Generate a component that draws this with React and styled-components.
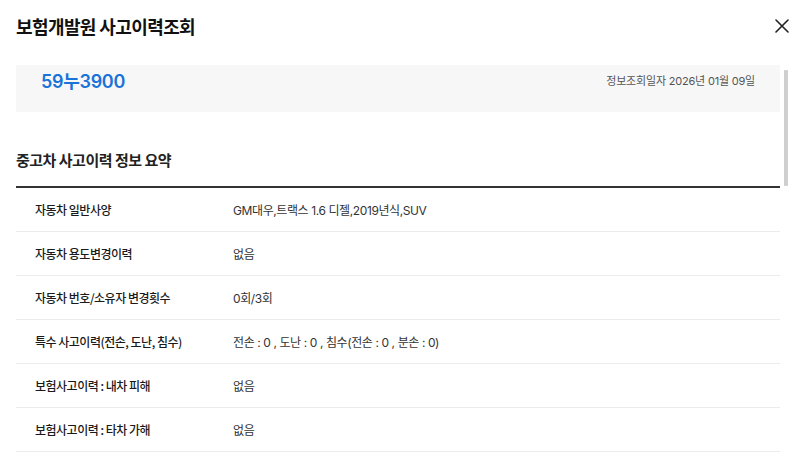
import React from "react";
import styled, { createGlobalStyle } from "styled-components";

const Global = createGlobalStyle`
  html, body { margin: 0; padding: 0; background: #fff; }
  body { font-family: "Noto Sans CJK KR", "Noto Sans", sans-serif; color: #222; }
  * { box-sizing: border-box; }
`;

const Modal = styled.div`
  width: 800px;
  height: 453px;
  overflow: hidden;
  background: #fff;
  display: flex;
  flex-direction: column;
`;

const Header = styled.div`
  display: flex;
  align-items: center;
  justify-content: space-between;
  padding: 15px 10px 0 16px;
`;

const Title = styled.h1`
  margin: 0;
  font-size: 18px;
  font-weight: 700;
  letter-spacing: -0.6px;
  line-height: 22px;
  color: #111;
`;

const CloseButton = styled.button`
  border: 0;
  background: none;
  padding: 0;
  width: 16px;
  height: 16px;
  display: flex;
  align-items: center;
  justify-content: center;
  cursor: pointer;
`;

const Body = styled.div`
  display: flex;
  flex: 1;
  padding: 28px 0 0 16px;
  gap: 4px;
`;

const Content = styled.div`
  flex: 1;
  max-width: 764px;
`;

const Scrollbar = styled.div`
  width: 4px;
  height: 116px;
  margin-top: 5px;
  background: #cfcfcf;
  border-radius: 1px;
`;

const PlateBox = styled.div`
  background: #f7f7f7;
  height: 47px;
  display: flex;
  justify-content: space-between;
  align-items: flex-start;
  padding: 6px 25px 0 25px;
`;

const Plate = styled.div`
  color: #1a73d8;
  font-family: "Inter", "Noto Sans CJK KR", sans-serif;
  font-size: 18px;
  font-weight: 600;
  letter-spacing: -0.3px;
  line-height: 22px;
`;

const QueryDate = styled.div`
  font-family: "Inter", "Noto Sans CJK KR", sans-serif;
  font-size: 11px;
  color: #555;
  letter-spacing: -0.2px;
  line-height: 16px;
  padding-top: 2px;
`;

const SectionTitle = styled.h2`
  margin: 37px 0 0;
  font-size: 15px;
  font-weight: 700;
  letter-spacing: -0.5px;
  color: #222;
  line-height: 22px;
  padding-bottom: 15px;
  border-bottom: 2px solid #333;
`;

const Table = styled.div`
  display: flex;
  flex-direction: column;
`;

const Row = styled.div`
  display: grid;
  grid-template-columns: 198px 1fr;
  align-items: center;
  height: 44px;
  padding-left: 19px;
  border-bottom: 1px solid #ececec;
`;

const Label = styled.div`
  font-size: 12px;
  font-weight: 500;
  color: #1a1a1a;
  letter-spacing: -0.5px;
`;

const Value = styled.div`
  font-family: "Inter", "Noto Sans CJK KR", sans-serif;
  font-size: 12px;
  font-weight: 400;
  color: #333;
  letter-spacing: -0.4px;
`;

const rows = [
  ["자동차 일반사양", "GM대우,트랙스 1.6 디젤,2019년식,SUV"],
  ["자동차 용도변경이력", "없음"],
  ["자동차 번호/소유자 변경횟수", "0회/3회"],
  ["특수 사고이력(전손, 도난, 침수)", "전손 : 0 , 도난 : 0 , 침수(전손 : 0 , 분손 : 0)"],
  ["보험사고이력 : 내차 피해", "없음"],
  ["보험사고이력 : 타차 가해", "없음"],
];

export default function App() {
  return (
    <>
      <Global />
      <Modal>
        <Header>
          <Title>보험개발원 사고이력조회</Title>
          <CloseButton aria-label="닫기">
            <svg width="14" height="14" viewBox="0 0 14 14">
              <path d="M1 1L13 13M13 1L1 13" stroke="#222" strokeWidth="1.6" strokeLinecap="round" />
            </svg>
          </CloseButton>
        </Header>
        <Body>
          <Content>
            <PlateBox>
              <Plate>59누3900</Plate>
              <QueryDate>정보조회일자 2026년 01월 09일</QueryDate>
            </PlateBox>
            <SectionTitle>중고차 사고이력 정보 요약</SectionTitle>
            <Table>
              {rows.map(([l, v]) => (
                <Row key={l}>
                  <Label>{l}</Label>
                  <Value>{v}</Value>
                </Row>
              ))}
            </Table>
          </Content>
          <Scrollbar />
        </Body>
      </Modal>
    </>
  );
}
